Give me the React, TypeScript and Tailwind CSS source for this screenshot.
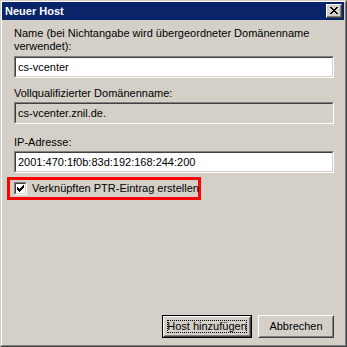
import React from 'react'

// pixel glyphs for the classic check mark and the close "X"
const CHECK = ['......X', '.....XX', 'X...XXX', 'XX.XXX.', 'XXXXX..', '.XXX...', '..X....']
const CLOSE = ['XX....XX', '.XX..XX.', '..XXXX..', '...XX...', '..XXXX..', '.XX..XX.', 'XX....XX']

function PixelGlyph({ rows }: { rows: string[] }) {
  const w = rows[0].length
  const h = rows.length
  return (
    <svg width={w} height={h} viewBox={`0 0 ${w} ${h}`} shapeRendering="crispEdges" className="shrink-0">
      {rows.map((row, y) =>
        row.split('').map((c, x) => (c === 'X' ? <rect key={`${x}-${y}`} x={x} y={y} width={1} height={1} fill="#000" /> : null))
      )}
    </svg>
  )
}

/** sunken classic edit box */
function Field({ value, readOnly = false }: { value: string; readOnly?: boolean }) {
  return (
    <div className="w-[320px] h-[22px] border border-t-[#808080] border-l-[#808080] border-r-white border-b-white">
      <div
        className={`h-full border border-t-[#404040] border-l-[#404040] border-r-[#d4d0c8] border-b-[#d4d0c8] pl-[2px] flex items-center ${
          readOnly ? 'bg-[#d4d0c8]' : 'bg-white'
        }`}
      >
        <span className="leading-[13px] whitespace-nowrap">{value}</span>
      </div>
    </div>
  )
}

function Button({ label, width, isDefault = false }: { label: string; width: string; isDefault?: boolean }) {
  const face = (
    <div className="h-full border border-t-white border-l-white border-r-[#404040] border-b-[#404040]">
      <div className="h-full border border-t-[#d4d0c8] border-l-[#d4d0c8] border-r-[#808080] border-b-[#808080] flex items-center justify-center p-[2px] whitespace-nowrap">
        {isDefault ? (
          <div className="w-full h-full border border-dotted border-black flex items-center justify-center">{label}</div>
        ) : (
          label
        )}
      </div>
    </div>
  )
  return (
    <div className={`${width} h-[23px] shrink-0 bg-[#d4d0c8] ${isDefault ? 'border border-black' : ''}`}>
      {face}
    </div>
  )
}

export default function App() {
  return (
    <div
      className="w-[347px] h-[347px] bg-[#d4d0c8] text-black text-[11px] leading-[13px] border border-t-[#d4d0c8] border-l-[#d4d0c8] border-r-[#404040] border-b-[#404040]"
      style={{ fontFamily: '"Liberation Sans", Arial, sans-serif' }}
    >
      <div className="h-full flex flex-col border border-t-white border-l-white border-r-[#808080] border-b-[#808080]">
        {/* caption bar */}
        <div className="h-[18px] mr-[1px] bg-[#0a246a] flex items-center justify-between pl-[3px] pr-[2px]">
          <span className="text-white font-bold">Neuer Host</span>
          <div className="w-[16px] h-[14px] bg-[#d4d0c8] border border-t-white border-l-white border-r-[#404040] border-b-[#404040]">
            <div className="w-full h-full border-r border-b border-[#808080] flex items-center justify-center">
              <PixelGlyph rows={CLOSE} />
            </div>
          </div>
        </div>

        {/* form body */}
        <div className="flex-1 flex flex-col pl-[12px]">
          <div className="mt-[7px] whitespace-nowrap">
            Name (bei Nichtangabe wird übergeordneter Domänenname
            <br />
            verwendet):
          </div>
          <div className="mt-[3px]">
            <Field value="cs-vcenter" />
          </div>

          <div className="mt-[9px]">Vollqualifizierter Domänenname:</div>
          <div className="mt-[2px]">
            <Field value="cs-vcenter.znil.de." readOnly />
          </div>

          <div className="mt-[12px]">IP-Adresse:</div>
          <div className="mt-[2px]">
            <Field value="2001:470:1f0b:83d:192:168:244:200" />
          </div>

          {/* highlighted checkbox row */}
          <div className="mt-[4px] ml-[-7px] w-[194px] h-[23px] border-[3px] border-[#ff0000] flex items-center pl-[4px] gap-[5px]">
            <div className="w-[13px] h-[13px] shrink-0 border border-t-[#808080] border-l-[#808080] border-r-white border-b-white">
              <div className="w-full h-full bg-white border border-t-[#404040] border-l-[#404040] border-r-[#d4d0c8] border-b-[#d4d0c8] flex items-center justify-center">
                <PixelGlyph rows={CHECK} />
              </div>
            </div>
            <span className="whitespace-nowrap">Verknüpften PTR-Eintrag erstellen</span>
          </div>

          <div className="flex-1" />

          <div className="flex justify-end gap-[6px] pr-[11px] mb-[7px]">
            <Button label="Host hinzufügen" width="w-[90px]" isDefault />
            <Button label="Abbrechen" width="w-[76px]" />
          </div>
        </div>
      </div>
    </div>
  )
}
